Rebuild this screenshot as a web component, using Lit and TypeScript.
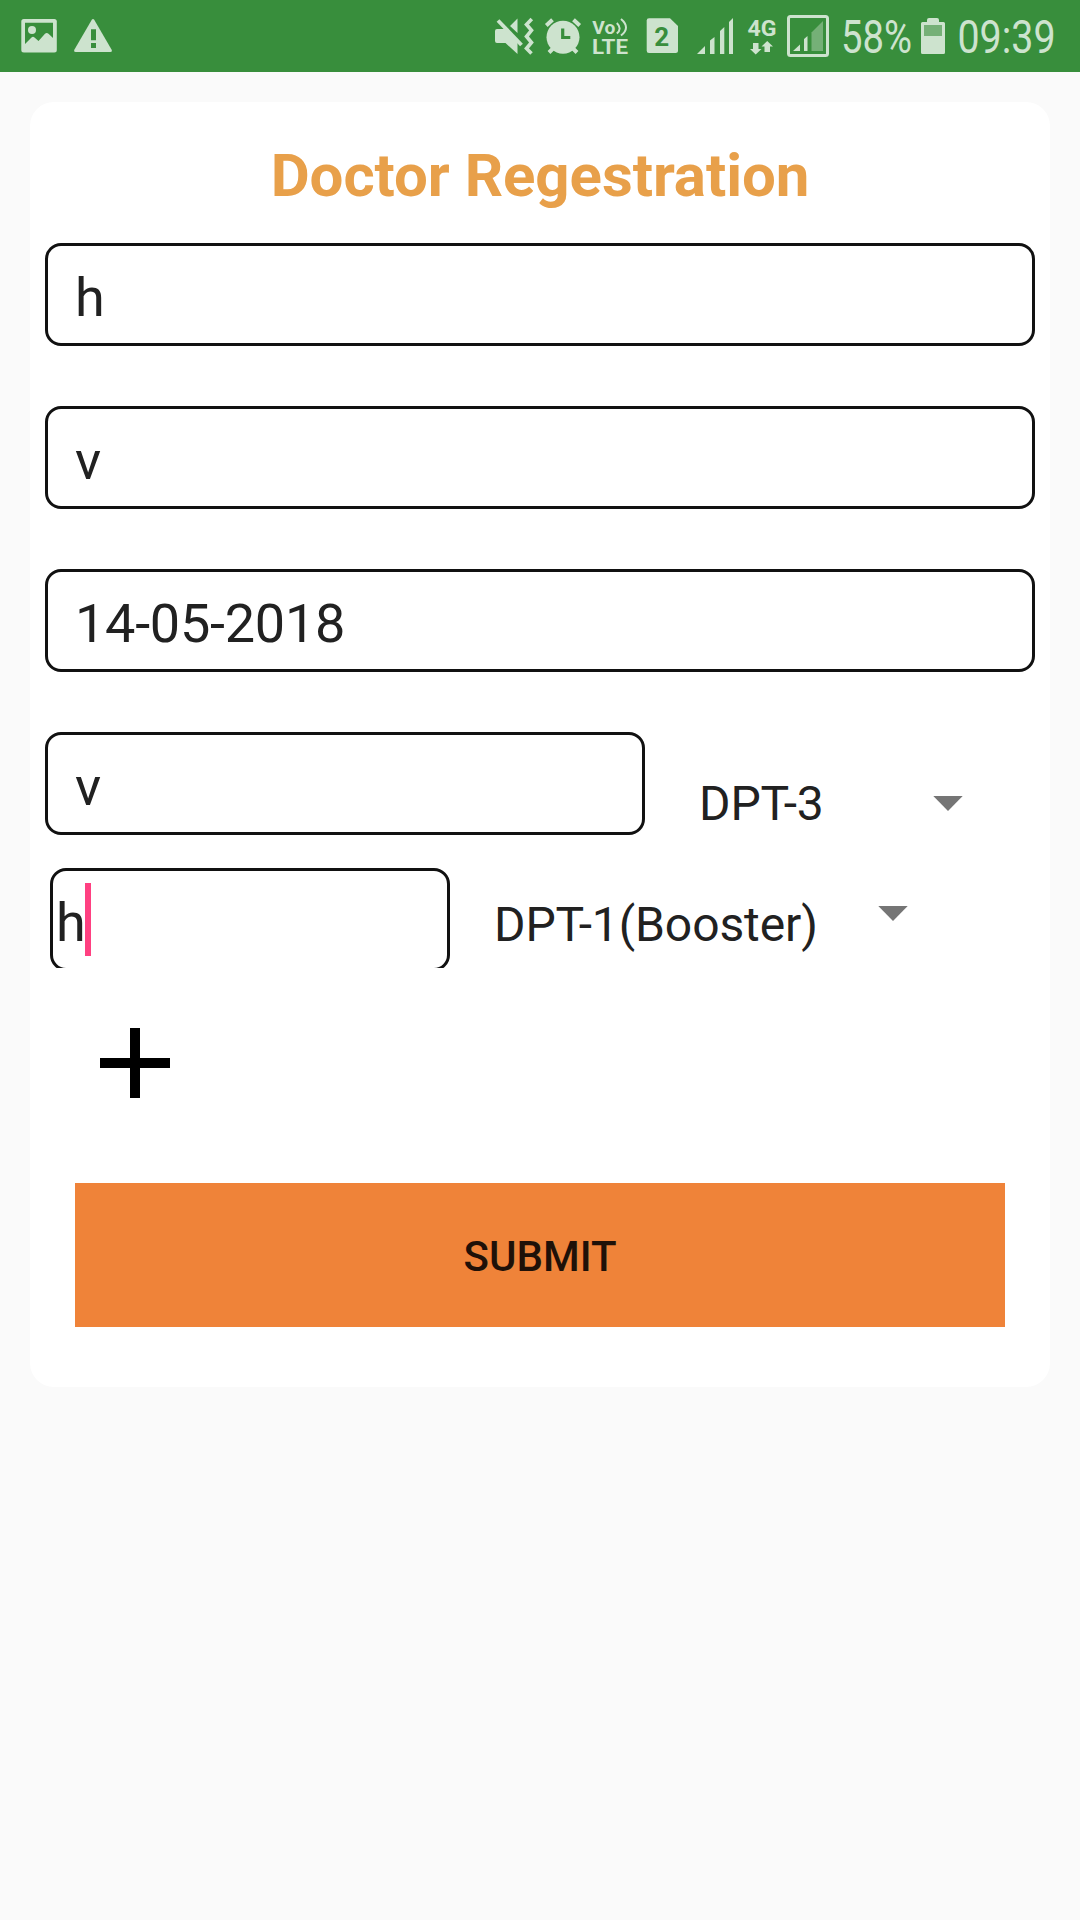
import { LitElement, html, css, svg } from "lit";
import { customElement, property } from "lit/decorators.js";

@customElement("status-bar")
class StatusBar extends LitElement {
  static styles = css`
    :host { display: flex; justify-content: space-between; height: 72px; background: #388e3c; }
    .group { display: flex; }
    svg { display: block; overflow: visible; height: 72px; fill: #cde3ce; stroke: none; font-family: Roboto, "Liberation Sans", sans-serif; }
    .cut { fill: #388e3c; }
    .dim { fill: #75b077; }
    .line { fill: none; stroke: #cde3ce; }
    .cutline { fill: none; stroke: #388e3c; }
  `;

  // Each cell shares the coordinate space of the bar, so icons keep one baseline.
  cell(x: number, w: number, body: unknown) {
    return html`<svg width=${w} viewBox="${x} 0 ${w} 72">${body}</svg>`;
  }

  render() {
    return html`
      <div class="group">
        ${this.cell(0, 66, svg`
          <rect x="21.3" y="19" width="35.5" height="33.5" rx="2.5"/>
          <path class="cut" d="M25 22.7H53V38L48.5 33.8Q46.8 32.300 45 33.8L38.500 41L34.500 37.500Q33 36.200 31.500 37.500L25 44Z"/>
          <circle cx="32" cy="30" r="4"/>`)}
        ${this.cell(66, 64, svg`
          <path d="M91.800 19.700Q93 18.300 94.200 19.700L111.800 50Q112.500 52 110.500 52H75.500Q73.500 52 74.200 50Z"/>
          <path class="cut" d="M91 29.300h5v11h-5zM91 43h5v5h-5z"/>`)}
      </div>
      <div class="group">
        ${this.cell(485, 55, svg`
          <path d="M517.500 18.500V33L510 26ZM495 31q0-2 2-2H505.500L517.500 41V54L505.500 43H497q-2 0-2-2Z"/>
          <path class="cutline" stroke-width="2" d="M501 20L524.500 43"/>
          <path class="line" stroke-width="3.800" d="M498 20.500L521.500 45"/>
          <path class="line" stroke-width="3.600" d="M531.800 19L526.500 24.500L531.500 30.300L526.500 36.500L531.500 42.500L526.500 48.500L531.500 53.500"/>`)}
        ${this.cell(540, 47, svg`
          <circle cx="563" cy="37.200" r="16.500"/>
          <path class="line" stroke-width="4" d="M546.300 25.500L552.500 19.700M579.700 25.500L573.500 19.700M553.500 48L549 52.500M572.500 48L577 52.500"/>
          <path class="cutline" stroke-width="3.200" d="M562.700 28.500V37.500H570.300"/>`)}
        ${this.cell(587, 48, svg`
          <text x="592.300" y="33.800" font-size="18.500" font-weight="700" textLength="23" lengthAdjust="spacingAndGlyphs">Vo</text>
          <path class="line" stroke-width="2" d="M616.800 23Q622.500 28.500 616.800 33.500M621 19Q631 27.500 621 35.500"/>
          <text x="592" y="54" font-size="20" font-weight="700" textLength="36" lengthAdjust="spacingAndGlyphs">LTE</text>`)}
        ${this.cell(635, 55, svg`
          <path d="M649 18.300H670L678 26V50.500Q678 53 675.500 53H649Q646.700 53 646.700 50.500V20.500Q646.700 18.300 649 18.300Z"/>
          <text class="cut" x="654.300" y="46" font-size="26" font-weight="700">2</text>`)}
        ${this.cell(690, 50, svg`
          <path d="M697 54L705 46V54ZM710 40.500L714.500 37V54H710ZM720 31L724.300 27V54H720ZM729 22L733 18V54H729Z"/>`)}
        ${this.cell(740, 45, svg`
          <text x="747.500" y="36" font-size="22" font-weight="700" textLength="29" lengthAdjust="spacingAndGlyphs">4G</text>
          <path d="M753 43H758.500V49H761.500L755.700 54.500L750 49H753ZM764.500 52H770V46.500H773L767.200 41L761.500 46.500H764.500Z"/>`)}
        ${this.cell(785, 50, svg`
          <rect class="line" x="788.500" y="16.500" width="39" height="39" rx="2" stroke-width="3"/>
          <path d="M793 51L800 44.500V51ZM804 39L807.500 36V51H804Z"/>
          <path class="dim" d="M811.500 32.500L823 21V51H811.500Z"/>`)}
        ${this.cell(835, 80, svg`
          <text x="841" y="53" font-size="45.500" textLength="71" lengthAdjust="spacingAndGlyphs">58%</text>`)}
        ${this.cell(915, 37, svg`
          <path d="M927 22V20Q927 18 929 18H937Q939 18 939 20V22H943.500Q945 22 945 23.500V52.500Q945 54 943.500 54H922.500Q921 54 921 52.500V23.500Q921 22 922.500 22Z"/>
          <path class="dim" d="M924 25h18v11h-18z"/>`)}
        ${this.cell(952, 128, svg`
          <text x="957.500" y="53" font-size="45.500" textLength="98" lengthAdjust="spacingAndGlyphs">09:39</text>`)}
      </div>`;
  }
}

@customElement("text-box")
class TextBox extends LitElement {
  @property() value = "";
  static styles = css`
    :host { display: flex; align-items: center; box-sizing: border-box; height: 103px; border: 3px solid #111; border-radius: 16px; padding: 5px 27px 0; font-size: 54px; line-height: 63px; letter-spacing: -0.25px; color: #212121; }
  `;
  render() {
    return html`${this.value}<slot></slot>`;
  }
}

@customElement("drop-down")
class DropDown extends LitElement {
  @property() value = "";
  static styles = css`
    :host { display: flex; justify-content: space-between; font-size: 48px; line-height: 56px; letter-spacing: -0.1px; color: #212121; }
    svg { display: block; fill: #757575; }
  `;
  render() {
    return html`<span>${this.value}</span>
      <svg part="arrow" width="30" height="15" viewBox="0 0 30 15"><path d="M.3 0H29.700L15 15Z"/></svg>`;
  }
}

@customElement("app-root")
class AppRoot extends LitElement {
  static styles = css`
    :host { display: block; height: 1920px; background: #fafafa; font-family: Roboto, "Liberation Sans", sans-serif; }
    .card { box-sizing: border-box; margin: 30px 30px 0; height: 1285px; padding: 39px 15px 0; border-radius: 24px; background: #fff; }
    .title { margin: 0; height: 70px; line-height: 70px; font-size: 60px; font-weight: 700; letter-spacing: -0.06px; text-align: center; color: #e8a04a; }
    .fields { display: flex; flex-direction: column; gap: 60px; margin-top: 32px; }
    .row { display: flex; }
    .row .wide { width: 600px; }
    .first { width: 264px; margin: 44px 0 0 54px; }
    .first::part(arrow) { margin-top: 20px; }
    .extra { display: flex; height: 100px; margin: 33px 0 0 5px; overflow: hidden; }
    .narrow { width: 400px; padding: 5px 3px 0; flex: none; }
    .caret { width: 6px; height: 73px; background: #ff4081; margin: -5px 0 0 -1px; }
    .second { width: 414px; margin: 29px 0 0 44px; }
    .second::part(arrow) { margin-top: 9px; }
    .plus { display: block; margin: 60px 0 0 55px; }
    .submit { display: block; width: 930px; height: 144px; margin: 85px auto 0; border: 0; padding: 2px 0 0; background: #ef8339; color: #1f1108; font: 500 42px Roboto, "Liberation Sans", sans-serif; }
  `;
  render() {
    return html`
      <status-bar></status-bar>
      <main class="card">
        <h1 class="title">Doctor Regestration</h1>
        <div class="fields">
          <text-box value="h"></text-box>
          <text-box value="v"></text-box>
          <text-box value="14-05-2018"></text-box>
          <div class="row">
            <text-box class="wide" value="v"></text-box>
            <drop-down class="first" value="DPT-3"></drop-down>
          </div>
        </div>
        <div class="extra">
          <text-box class="narrow" value="h"><div class="caret"></div></text-box>
          <drop-down class="second" value="DPT-1(Booster)"></drop-down>
        </div>
        <svg class="plus" width="70" height="70" viewBox="0 0 70 70"><path d="M30 0H40V30H70V40H40V70H30V40H0V30H30Z"/></svg>
        <button class="submit">SUBMIT</button>
      </main>`;
  }
}
